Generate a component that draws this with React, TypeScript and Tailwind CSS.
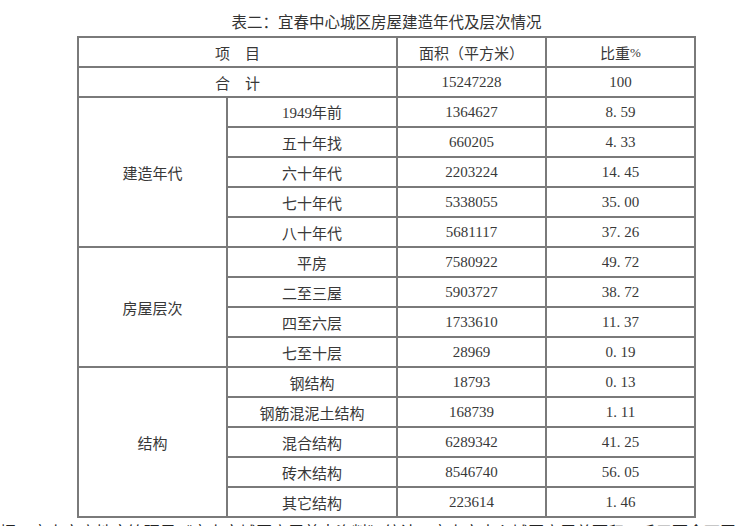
import React from "react";

const cjk = "font-['Noto_Sans_CJK_SC','Noto_Sans',sans-serif]";
const serif = "font-['Liberation_Serif','Noto_Sans_CJK_SC',serif]";

function Num({ v }: { v: string }) {
  const i = v.indexOf(".");
  if (i < 0) return <span className={serif}>{v}</span>;
  return (
    <span className={serif}>
      {v.slice(0, i)}
      <span className="inline-block w-[7.5px] text-left">.</span>
      {v.slice(i + 1)}
    </span>
  );
}

type Row = { name: string; area: string; pct: string };

const groups: { label: string; span: string; rows: Row[] }[] = [
  {
    label: "建造年代",
    span: "row-span-5",
    rows: [
      { name: "1949年前", area: "1364627", pct: "8.59" },
      { name: "五十年找", area: "660205", pct: "4.33" },
      { name: "六十年代", area: "2203224", pct: "14.45" },
      { name: "七十年代", area: "5338055", pct: "35.00" },
      { name: "八十年代", area: "5681117", pct: "37.26" },
    ],
  },
  {
    label: "房屋层次",
    span: "row-span-4",
    rows: [
      { name: "平房", area: "7580922", pct: "49.72" },
      { name: "二至三屋", area: "5903727", pct: "38.72" },
      { name: "四至六层", area: "1733610", pct: "11.37" },
      { name: "七至十层", area: "28969", pct: "0.19" },
    ],
  },
  {
    label: "结构",
    span: "row-span-5",
    rows: [
      { name: "钢结构", area: "18793", pct: "0.13" },
      { name: "钢筋混泥土结构", area: "168739", pct: "1.11" },
      { name: "混合结构", area: "6289342", pct: "41.25" },
      { name: "砖木结构", area: "8546740", pct: "56.05" },
      { name: "其它结构", area: "223614", pct: "1.46" },
    ],
  },
];

const cell = "bg-white flex items-center justify-center text-[15px] text-[#383838] leading-none";

function NameText({ t }: { t: string }) {
  const m = t.match(/^(\d+)(.*)$/);
  if (m) {
    return (
      <span>
        <span className={serif}>{m[1]}</span>
        <span className={cjk}>{m[2]}</span>
      </span>
    );
  }
  return <span className={cjk}>{t}</span>;
}

export default function App() {
  const cells: React.ReactNode[] = [];
  groups.forEach((g, gi) => {
    g.rows.forEach((r, ri) => {
      if (ri === 0) {
        cells.push(
          <div key={`g${gi}`} className={`${cell} ${cjk} ${g.span}`}>
            {g.label}
          </div>
        );
      }
      cells.push(
        <div key={`n${gi}-${ri}`} className={cell}>
          <NameText t={r.name} />
        </div>,
        <div key={`a${gi}-${ri}`} className={cell}>
          <Num v={r.area} />
        </div>,
        <div key={`p${gi}-${ri}`} className={cell}>
          <Num v={r.pct} />
        </div>
      );
    });
  });

  return (
    <div className="w-[740px] h-[526px] overflow-hidden bg-white relative">
      <div className="w-[696px] pl-[77px]">
        <div
          className={`h-[36px] flex items-end justify-center pb-[5px] text-[15.5px] leading-[20px] text-[#333] ${cjk}`}
        >
          表二：宜春中心城区房屋建造年代及层次情况
        </div>
        <div className="grid grid-cols-[147px_168px_147px_147px] auto-rows-[28px] gap-[2px] p-[2px] bg-[#7a7a7a] w-[619px]">
          <div className={`${cell} ${cjk} col-span-2`}>项　目</div>
          <div className={`${cell} ${cjk}`}>面积（平方米）</div>
          <div className={cell}>
            <span className={cjk}>比重</span>
            <span className={`${serif} text-[13px]`}>%</span>
          </div>
          <div className={`${cell} ${cjk} col-span-2`}>合　计</div>
          <div className={cell}>
            <Num v="15247228" />
          </div>
          <div className={cell}>
            <Num v="100" />
          </div>
          {cells}
        </div>
        <div
          className={`whitespace-nowrap text-[16px] leading-[20px] text-[#222] mt-[3px] -ml-[77px] ${cjk}`}
        >
          据：宜春市房地产管理局《宜春市城区房屋普查资料》统计，宜春市中心城区房屋总面积一千五百余万平方米，其中住宅面积约占六成以上
        </div>
      </div>
    </div>
  );
}
